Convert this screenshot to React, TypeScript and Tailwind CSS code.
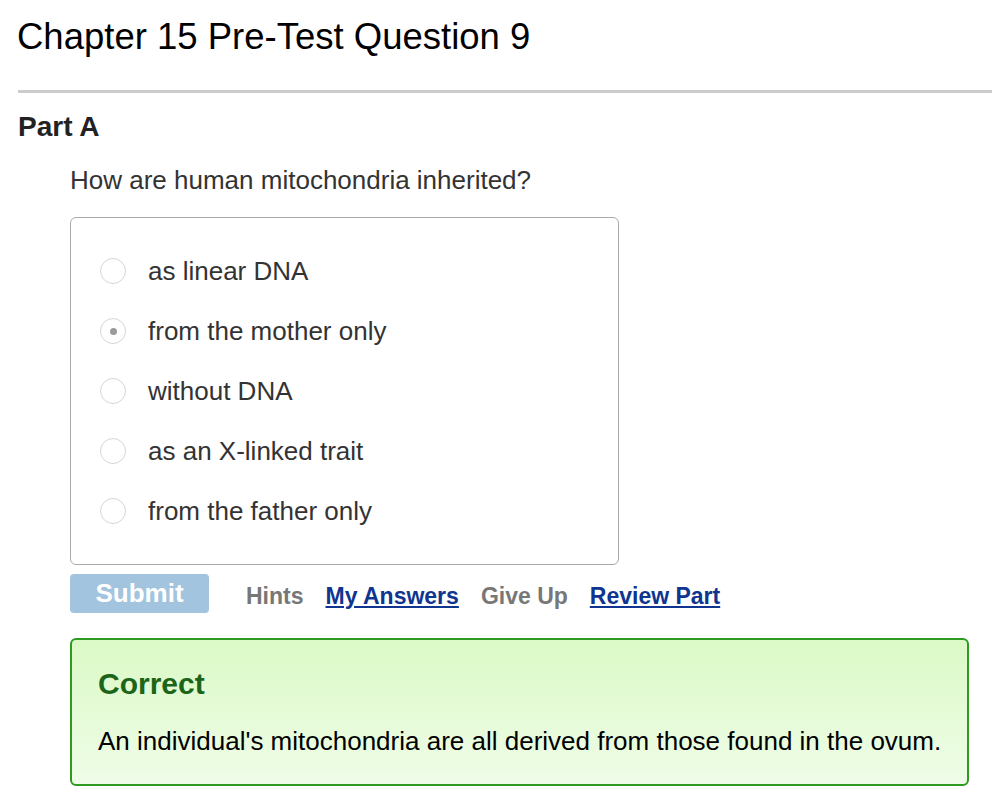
import React from "react";

const options = [
  "as linear DNA",
  "from the mother only",
  "without DNA",
  "as an X-linked trait",
  "from the father only",
];

function Radio({ checked }: { checked: boolean }) {
  return (
    <span className="flex h-[26px] w-[26px] shrink-0 items-center justify-center rounded-full border border-[#d6d6d6] bg-white">
      {checked && <span className="h-[7px] w-[7px] rounded-full bg-[#9a9a9a]" />}
    </span>
  );
}

export default function App() {
  return (
    <div className="min-h-screen bg-white font-['Liberation_Sans',Arial,sans-serif] text-[#333]">
      <div className="pl-[17px] pt-[16px]">
        <h1 className="text-[36.5px] leading-[41px] text-black">Chapter 15 Pre-Test Question 9</h1>
      </div>
      <div className="ml-[18px] mt-[33px] h-[3px] bg-[#cccccc]" />
      <div className="pl-[18px] pt-[18px]">
        <h2 className="text-[28px] font-bold leading-[32px] text-[#222]">Part A</h2>
        <div className="pl-[52px]">
          <p className="mt-[22px] text-[26px] leading-[30px]">How are human mitochondria inherited?</p>
          <div className="mt-[22px] w-[549px] rounded-[6px] border border-[#aaaaaa] pb-[23px] pt-[23px]">
            {options.map((o, i) => (
              <label key={o} className="flex h-[60px] items-center gap-[22px] pl-[29px]">
                <Radio checked={i === 1} />
                <span className="text-[26px] leading-[30px]">{o}</span>
              </label>
            ))}
          </div>
          <div className="mt-[9px] flex items-center">
            <button className="h-[39px] w-[139px] rounded-[4px] bg-[#a3c4de] text-[26px] font-bold leading-[39px] text-white">
              Submit
            </button>
            <div className="ml-[37px] flex items-center gap-[22px] pt-[5px] text-[23px] font-bold">
              <span className="text-[#777]">Hints</span>
              <a className="text-[#0f3590] underline">My Answers</a>
              <span className="text-[#777]">Give Up</span>
              <a className="text-[#0f3590] underline">Review Part</a>
            </div>
          </div>
          <div className="mt-[24px] w-[899px] rounded-[6px] border-2 border-[#2f9a22] bg-gradient-to-b from-[#dbf9c6] to-[#effde8] pb-[28px] pl-[26px] pt-[27px]">
            <div className="text-[30px] font-bold leading-[34px] text-[#1c6418]">Correct</div>
            <p className="mt-[25px] whitespace-nowrap text-[26px] leading-[30px] text-black">
              An individual's mitochondria are all derived from those found in the ovum.
            </p>
          </div>
        </div>
      </div>
    </div>
  );
}
